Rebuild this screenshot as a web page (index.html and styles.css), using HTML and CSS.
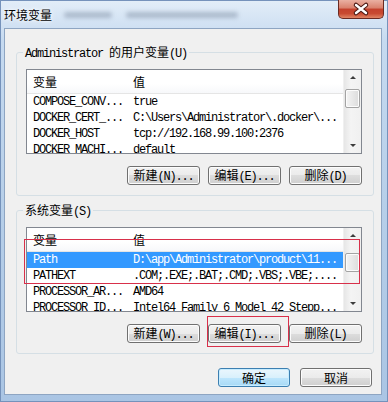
FILE: index.html
```html
<!DOCTYPE html>
<html lang="zh-CN">
<head>
  <meta charset="UTF-8" />
  <title>环境变量</title>
  <link rel="stylesheet" href="styles.css">
</head>
<body>
  <div class="window">
    <!-- 标题栏 -->
    <div class="titlebar">
      <span class="title">环境变量</span>
      <span class="ghost g1"></span>
      <span class="ghost g2"></span>
      <div class="close">
        <svg width="44" height="18" viewBox="0 0 44 18">
          <path d="M17 5 L27 13 M27 5 L17 13" stroke="#4a1812" stroke-width="4.5" stroke-linecap="round" fill="none"/>
          <path d="M17 5 L27 13 M27 5 L17 13" stroke="#ffffff" stroke-width="2.4" stroke-linecap="round" fill="none"/>
        </svg>
      </div>
    </div>

    <div class="client">
      <!-- 用户变量 -->
      <div class="group first">
        <div class="group-label"><span class="en">Administrator </span>的用户变量<span class="en">(U)</span></div>
        <div class="listbox">
          <div class="rows">
            <div class="head"><span class="c1">变量</span><span class="c2">值</span></div>
            <div class="row"><span class="c1">COMPOSE_CONV...</span><span class="c2">true</span></div>
            <div class="row"><span class="c1">DOCKER_CERT_...</span><span class="c2">C:\Users\Administrator\.docker\...</span></div>
            <div class="row"><span class="c1">DOCKER_HOST</span><span class="c2">tcp://192.168.99.100:2376</span></div>
            <div class="row"><span class="c1">DOCKER_MACHI...</span><span class="c2">default</span></div>
          </div>
          <div class="scrollbar">
            <div class="arrow up"></div>
            <div class="thumb top"></div>
            <div class="arrow down"></div>
          </div>
        </div>
        <div class="buttons">
          <button class="btn">新建<span class="en">(N)...</span></button>
          <button class="btn">编辑<span class="en">(E)...</span></button>
          <button class="btn">删除<span class="en">(D)</span></button>
        </div>
      </div>

      <!-- 系统变量 -->
      <div class="group second">
        <div class="group-label">系统变量<span class="en">(S)</span></div>
        <div class="listbox">
          <div class="rows">
            <div class="head"><span class="c1">变量</span><span class="c2">值</span></div>
            <div class="row selected"><span class="c1">Path</span><span class="c2">D:\app\Administrator\product\11...</span></div>
            <div class="row"><span class="c1">PATHEXT</span><span class="c2">.COM;.EXE;.BAT;.CMD;.VBS;.VBE;....</span></div>
            <div class="row"><span class="c1">PROCESSOR_AR...</span><span class="c2">AMD64</span></div>
            <div class="row"><span class="c1">PROCESSOR_ID...</span><span class="c2">Intel64 Family 6 Model 42 Stepp...</span></div>
          </div>
          <div class="scrollbar">
            <div class="arrow up"></div>
            <div class="thumb lower"></div>
            <div class="arrow down"></div>
          </div>
        </div>
        <div class="buttons">
          <button class="btn">新建<span class="en">(W)...</span></button>
          <button class="btn">编辑<span class="en">(I)...</span></button>
          <button class="btn">删除<span class="en">(L)</span></button>
        </div>
      </div>

      <div class="dialog-buttons">
        <button class="btn default">确定</button>
        <button class="btn">取消</button>
      </div>
    </div>

    <!-- 红色标注框 -->
    <div class="mark mark-rows"></div>
    <div class="mark mark-edit"></div>
  </div>
</body>
</html>
```

FILE: styles.css
```css
body {
  margin: 0;
  font-family: "Noto Sans CJK SC", sans-serif;
  font-size: 12px;
  color: #000;
  background: #fff;
}
.window {
  position: relative;
  width: 388px;
  height: 402px;
  box-sizing: border-box;
  display: flex;
  flex-direction: column;
  border: 1px solid #7592bb;
  background: linear-gradient(#e2edf8, #c6daf0 40px, #b7cfe9 200px, #aac5e4);
}
.titlebar {
  height: 27px;
  display: flex;
  align-items: center;
  padding-left: 3px;
}
.title {
  line-height: 14px;
  text-shadow: 0 0 6px #fff, 0 0 3px #fff;
}
.ghost {
  height: 6px;
  border-radius: 3px;
  background: rgba(90, 105, 130, 0.35);
  filter: blur(2px);
}
.g1 { width: 48px; margin-left: 12px; }
.g2 { width: 112px; margin-left: 14px; }
.close {
  align-self: flex-start;
  margin: -1px 3px 0 auto;
  width: 46px;
  height: 19px;
  box-sizing: border-box;
  border: 1px solid #6a2a22;
  border-top: none;
  border-radius: 0 0 5px 5px;
  background: linear-gradient(#eab0a2 0%, #d9806c 45%, #c4412d 50%, #c84a31 75%, #e08565 100%);
  display: flex;
  justify-content: center;
}
.client {
  flex: 1;
  margin: 0 5px 6px 3px;
  border: 1px solid #8ea5c2;
  background: #f0f0f0;
  display: flex;
  flex-direction: column;
}
.group {
  margin: 0 7px 0 11px;
  padding: 0 11px 10px 9px;
  border: 1px solid #d5dfe5;
  border-radius: 3px;
}
.group.first { margin-top: 23px; }
.group.second { margin-top: 14px; }
.group-label {
  display: table;
  margin: -8px 0 0 -3px;
  padding: 0 2px;
  line-height: 14px;
  background: #f0f0f0;
}
.en {
  font-family: "Liberation Mono", monospace;
  font-size: 12px;
  letter-spacing: -1.2px;
}
.listbox {
  margin-top: 8px;
  height: 85px;
  box-sizing: border-box;
  border: 1px solid #828790;
  background: #fff;
  display: flex;
  overflow: hidden;
}
.rows {
  flex: 1;
  min-width: 0;
}
.head, .row {
  display: flex;
  white-space: nowrap;
}
.head {
  height: 24px;
  box-sizing: border-box;
  align-items: center;
  border-bottom: 1px solid #e5e5e5;
  background: linear-gradient(#ffffff, #ffffff 60%, #f7f8fa);
}
.row {
  height: 16px;
  line-height: 17px;
  font-family: "Liberation Mono", monospace;
  font-size: 12px;
  letter-spacing: -1.2px;
}
.row.selected {
  background: #3399ff;
  color: #fff;
}
.c1 {
  width: 100px;
  padding-left: 6px;
  box-sizing: border-box;
  flex-shrink: 0;
}
.c2 { padding-left: 6px; }
.head .c1, .head .c2 { letter-spacing: 0; }
.scrollbar {
  width: 17px;
  flex-shrink: 0;
  display: flex;
  flex-direction: column;
  align-items: center;
  background: linear-gradient(to right, #e6e6e6, #f4f4f4 40%, #f0f0f0);
  border-left: 1px solid #f0f0f0;
}
.arrow {
  width: 0;
  height: 0;
  border-left: 3px solid transparent;
  border-right: 3px solid transparent;
}
.arrow.up {
  margin-top: 6px;
  border-bottom: 3px solid #3c3c3c;
}
.arrow.down {
  margin: auto 0 6px;
  border-top: 3px solid #3c3c3c;
}
.thumb {
  width: 15px;
  height: 19px;
  box-sizing: border-box;
  border: 1px solid #a3a3a3;
  border-radius: 2px;
  background: linear-gradient(to right, #f4f4f4, #e8e8e8 50%, #dcdcdc);
  box-shadow: inset 0 0 0 1px #fcfcfc;
}
.thumb.top { margin-top: 10px; }
.thumb.lower { margin-top: 16px; }
.buttons {
  margin-top: 12px;
  display: flex;
  justify-content: flex-end;
  gap: 8px;
}
.btn {
  width: 73px;
  height: 19px;
  padding: 0;
  box-sizing: border-box;
  border: 1px solid #707070;
  border-radius: 3px;
  background: linear-gradient(#f2f2f2 0%, #ebebeb 50%, #dddddd 50%, #cfcfcf 100%);
  box-shadow: inset 0 0 0 1px #fcfcfc;
  font-family: "Noto Sans CJK SC", sans-serif;
  font-size: 12px;
  line-height: 15px;
  color: #000;
}
.dialog-buttons {
  margin-top: 14px;
  padding-right: 9px;
  display: flex;
  justify-content: flex-end;
  gap: 10px;
}
.dialog-buttons .btn { width: 72px; }
.btn.default {
  border-color: #3c7fb1;
  background: linear-gradient(#eaf6fd 0%, #d9f0fc 50%, #bee6fd 50%, #a7d9f5 100%);
  box-shadow: inset 0 0 0 1px #c6ecff;
}
.mark {
  position: absolute;
  border: 1px solid #d8304a;
}
.mark-rows {
  left: 23px;
  top: 238px;
  width: 334px;
  height: 43px;
}
.mark-edit {
  left: 206px;
  top: 315px;
  width: 80px;
  height: 29px;
}
```
